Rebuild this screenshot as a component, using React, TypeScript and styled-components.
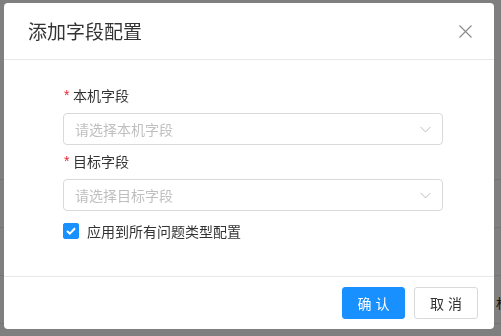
import React, { useState } from "react";
import styled, { createGlobalStyle } from "styled-components";

const GlobalStyle = createGlobalStyle`
  html, body {
    margin: 0;
    padding: 0;
    width: 501px;
    height: 336px;
    overflow: hidden;
    background: #fff;
    font-family: "Noto Sans CJK SC", "Noto Sans", "Liberation Sans", sans-serif;
  }
  * {
    box-sizing: border-box;
  }
`;

// page behind the mask, only a thin strip of it shows
const Page = styled.div`
  width: 501px;
  height: 336px;
  display: flex;
  flex-direction: column;
  padding-top: 132px;
`;

const PageRow = styled.div`
  height: 48px;
  border-bottom: 1px solid #e8e8e8;
  display: flex;
  align-items: center;
  justify-content: flex-end;
  gap: 2px;
  font-size: 13px;
  color: #222;
  padding-top: 6px;
`;

const RowTag = styled.span`
  width: 2px;
  height: 12px;
  background: #1890ff;
`;

const RowText = styled.span`
  width: 5px;
  overflow: hidden;
  white-space: nowrap;
`;

const Mask = styled.div`
  position: fixed;
  inset: 0;
  background: rgba(0, 0, 0, 0.5);
`;

const Wrap = styled.div`
  position: fixed;
  inset: 0;
  padding: 3px 0 0 4px;
`;

const Modal = styled.div`
  width: 490px;
  background: #fff;
  border-radius: 4px;
  display: flex;
  flex-direction: column;
  overflow: hidden;
`;

const Header = styled.div`
  height: 57px;
  border-bottom: 1px solid #e8e8e8;
  display: flex;
  align-items: center;
  justify-content: space-between;
  padding: 0 22px 0 24px;
`;

const Title = styled.div`
  font-size: 19px;
  color: #333;
  line-height: 24px;
`;

const CloseButton = styled.button`
  border: none;
  background: none;
  padding: 0;
  width: 14px;
  height: 14px;
  display: flex;
  align-items: center;
  justify-content: center;
  cursor: pointer;
`;

const Body = styled.div`
  height: 216px;
  padding: 24px 51px 0 59px;
  display: flex;
  flex-direction: column;
`;

const Label = styled.div<{ $gap: number }>`
  height: 22px;
  line-height: 22px;
  font-size: 14px;
  color: #333;
  display: flex;
  align-items: center;
  margin-bottom: ${p => p.$gap}px;
`;

const Star = styled.span`
  color: #f5222d;
  font-family: SimSun, "Liberation Sans", sans-serif;
  font-size: 14px;
  width: 10px;
  padding-left: 1px;
`;

const Select = styled.div<{ $gap: number }>`
  height: 32px;
  border: 1px solid #d9d9d9;
  border-radius: 4px;
  display: flex;
  align-items: center;
  justify-content: space-between;
  padding: 0 11px 0 11px;
  margin-bottom: ${p => p.$gap}px;
  cursor: pointer;
`;

const Placeholder = styled.span`
  font-size: 14px;
  color: #bfbfbf;
`;

const CheckRow = styled.label`
  height: 22px;
  display: flex;
  align-items: center;
  gap: 8px;
  font-size: 14px;
  color: #333;
  cursor: pointer;
`;

const CheckBox = styled.span<{ $on: boolean }>`
  width: 16px;
  height: 16px;
  border-radius: 2px;
  background: ${p => (p.$on ? "#1890ff" : "#fff")};
  border: 1px solid ${p => (p.$on ? "#1890ff" : "#d9d9d9")};
  display: flex;
  align-items: center;
  justify-content: center;
`;

const Footer = styled.div`
  border-top: 1px solid #e8e8e8;
  padding: 10px 16px 10px 0;
  display: flex;
  justify-content: flex-end;
  gap: 9px;
`;

const Button = styled.button<{ $primary?: boolean }>`
  height: 32px;
  width: ${p => (p.$primary ? 63 : 64)}px;
  border-radius: 3px;
  font-family: "Noto Sans CJK SC", sans-serif;
  font-size: 14px;
  letter-spacing: 4px;
  padding: 0 0 0 4px;
  cursor: pointer;
  background: ${p => (p.$primary ? "#1890ff" : "#fff")};
  color: ${p => (p.$primary ? "#fff" : "#333")};
  border: 1px solid ${p => (p.$primary ? "#1890ff" : "#d9d9d9")};
`;

const Chevron = () => (
  <svg width="11" height="7" viewBox="0 0 11 7" fill="none">
    <path d="M0.5 0.8 L5.5 6 L10.5 0.8" stroke="#bfbfbf" strokeWidth="1" />
  </svg>
);

const CloseIcon = () => (
  <svg width="13" height="13" viewBox="0 0 13 13" fill="none">
    <path d="M0.5 0.5 L12.5 12.5 M12.5 0.5 L0.5 12.5" stroke="#8c8c8c" strokeWidth="1.2" />
  </svg>
);

const fields = [
  { label: "本机字段", placeholder: "请选择本机字段", labelGap: 7, selectGap: 5 },
  { label: "目标字段", placeholder: "请选择目标字段", labelGap: 7, selectGap: 9 },
];

const App: React.FC = () => {
  const [applyAll, setApplyAll] = useState(true);

  return (
    <>
      <GlobalStyle />
      <Page>
        <PageRow />
        <PageRow />
        <PageRow />
        <PageRow>
          <RowTag />
          <RowText>材料</RowText>
        </PageRow>
      </Page>
      <Mask />
      <Wrap>
        <Modal>
          <Header>
            <Title>添加字段配置</Title>
            <CloseButton>
              <CloseIcon />
            </CloseButton>
          </Header>
          <Body>
            {fields.map(f => (
              <React.Fragment key={f.label}>
                <Label $gap={f.labelGap}>
                  <Star>*</Star>
                  {f.label}
                </Label>
                <Select $gap={f.selectGap}>
                  <Placeholder>{f.placeholder}</Placeholder>
                  <Chevron />
                </Select>
              </React.Fragment>
            ))}
            <CheckRow onClick={() => setApplyAll(!applyAll)}>
              <CheckBox $on={applyAll}>
                {applyAll && (
                  <svg width="10" height="8" viewBox="0 0 10 8" fill="none">
                    <path d="M1 4 L3.8 6.6 L9 1.2" stroke="#fff" strokeWidth="2" />
                  </svg>
                )}
              </CheckBox>
              应用到所有问题类型配置
            </CheckRow>
          </Body>
          <Footer>
            <Button $primary>确认</Button>
            <Button>取消</Button>
          </Footer>
        </Modal>
      </Wrap>
    </>
  );
};

export default App;
